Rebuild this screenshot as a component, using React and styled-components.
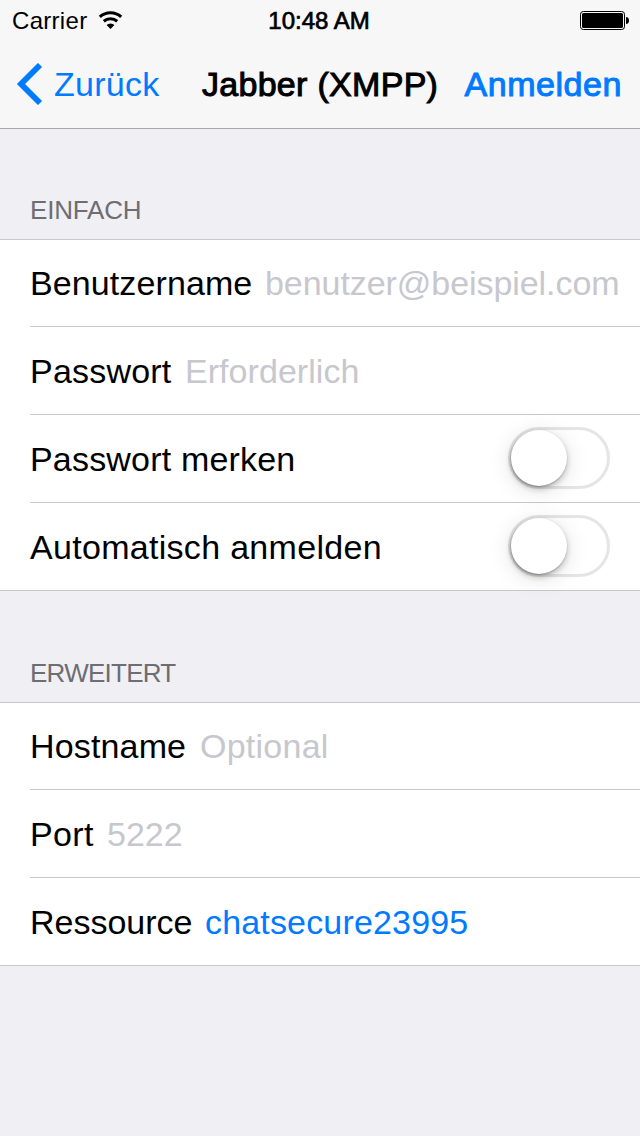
import React from "react";
import styled, { createGlobalStyle, css } from "styled-components";

const GlobalStyle = createGlobalStyle`
  html, body { margin: 0; background: #efeff4; }
  * { box-sizing: border-box; }
`;

const BLUE = "#007aff";

const Screen = styled.main`
  width: 640px;
  height: 1136px;
  overflow: hidden;
  background: #efeff4;
  color: #000;
  font-family: "Liberation Sans", Arial, sans-serif;
  font-size: 34px;
  white-space: nowrap;
`;

const Header = styled.header`
  height: 129px;
  background: #f7f7f7;
  border-bottom: 1px solid #a7a7ab;
`;

const medium = css`
  -webkit-text-stroke: 1px currentColor;
`;

const StatusBar = styled.div`
  display: grid;
  grid-template-columns: 1fr auto 1fr;
  height: 40px;
  padding: 1px 11px 0 12px;
  font-size: 24px;
  line-height: 40px;
`;

const Carrier = styled.div`
  display: flex;
  gap: 11px;
  letter-spacing: 0.3px;
  svg { margin-top: 10px; }
`;

const Clock = styled.time`
  padding-right: 3px;
  -webkit-text-stroke: 0.7px currentColor;
`;

const BatterySlot = styled.div`
  display: flex;
  justify-content: flex-end;
  svg { margin-top: 10px; }
`;

const NavBar = styled.nav`
  display: flex;
  align-items: center;
  height: 88px;
  padding: 0 18px 0 16px;
  line-height: 88px;
`;

const NavButton = styled.a`
  display: flex;
  align-items: center;
  gap: 11px;
  color: ${BLUE};
  letter-spacing: ${(p) => p.$track || 0}px;
  ${(p) => p.$strong && medium}
`;

const Title = styled.h1`
  flex: 1;
  margin: 0;
  padding-left: 42.5px;
  font: inherit;
  letter-spacing: 0.3px;
  ${medium}
`;

const SectionTitle = styled.h2`
  height: 49px;
  margin: ${(p) => p.$gap}px 0 0;
  padding-left: 30px;
  color: #6d6d72;
  font-size: 26px;
  font-weight: 400;
  line-height: 40px;
  letter-spacing: ${(p) => p.$track || 0}px;
`;

const Group = styled.div`
  background: #fff;
  box-shadow: inset 0 1px #c8c7cc, inset 0 -1px #c8c7cc;
`;

const Row = styled.div`
  display: flex;
  height: 88px;
  margin-left: 30px;
  padding-right: 30px;
  line-height: 88px;
  & + & { box-shadow: 0 -1px #c8c7cc; }
`;

const Label = styled.span`
  width: ${(p) => (p.$width ? p.$width + "px" : "auto")};
  flex: ${(p) => (p.$width ? "none" : "1")};
  letter-spacing: ${(p) => p.$track || 0}px;
`;

const Value = styled.span`
  color: ${(p) => (p.$filled ? BLUE : "#c7c7cd")};
  letter-spacing: ${(p) => p.$track || 0}px;
`;

const Toggle = styled.span`
  width: 102px;
  height: 62px;
  margin-top: 12px;
  border: 3px solid #e5e5e5;
  border-radius: 31px;
`;

const Knob = styled.span`
  display: block;
  width: 56px;
  height: 56px;
  border-radius: 50%;
  background: #fff;
  box-shadow: -0.5px 1px 2px rgba(0, 0, 0, 0.3), 0 3px 6px rgba(0, 0, 0, 0.22), 0 4px 24px rgba(0, 0, 0, 0.12);
`;

const WifiIcon = () => (
  <svg width="25" height="18" viewBox="0 0 25 18" fill="none" stroke="#000" strokeWidth="3.1">
    <path d="M1.8 5.9 A16 16 0 0 1 23.2 5.9" />
    <path d="M5.8 10.3 A10.3 10.3 0 0 1 19.2 10.3" />
    <path d="M12.5 18 L8.6 14 A5.6 5.6 0 0 1 16.4 14 Z" fill="#000" stroke="none" />
  </svg>
);

const BatteryIcon = () => (
  <svg width="49" height="19" viewBox="0 0 49 19">
    <rect x="0.5" y="0.5" width="44" height="18" rx="2.8" fill="none" stroke="#000" />
    <rect x="2" y="2" width="41" height="15" rx="1.6" />
    <path d="M46 6 C48 6 49 7.5 49 9.5 C49 11.5 48 13 46 13 Z" />
  </svg>
);

const BackIcon = () => (
  <svg width="27" height="42" viewBox="0 0 27 42" fill="none" stroke={BLUE} strokeWidth="5.8">
    <path d="M24 2 L5 21 L24 40" />
  </svg>
);

const SwitchRow = ({ label, track }) => (
  <Row>
    <Label $track={track}>{label}</Label>
    <Toggle role="switch" aria-checked="false"><Knob /></Toggle>
  </Row>
);

const FieldRow = ({ label, width, track, value, valueTrack, filled }) => (
  <Row>
    <Label $width={width} $track={track}>{label}</Label>
    <Value $filled={filled} $track={valueTrack}>{value}</Value>
  </Row>
);

export default function App() {
  return (
    <Screen>
      <GlobalStyle />
      <Header>
        <StatusBar>
          <Carrier>Carrier<WifiIcon /></Carrier>
          <Clock>10:48 AM</Clock>
          <BatterySlot><BatteryIcon /></BatterySlot>
        </StatusBar>
        <NavBar>
          <NavButton $track={0.25}><BackIcon />Zurück</NavButton>
          <Title>Jabber (XMPP)</Title>
          <NavButton $strong $track={0.55}>Anmelden</NavButton>
        </NavBar>
      </Header>
      <SectionTitle $gap={61} $track={-0.2}>EINFACH</SectionTitle>
      <Group>
        <FieldRow label="Benutzername" width={235} track={0.1} value="benutzer@beispiel.com" valueTrack={-0.06} />
        <FieldRow label="Passwort" width={155} track={0.2} value="Erforderlich" valueTrack={0.05} />
        <SwitchRow label="Passwort merken" track={0.18} />
        <SwitchRow label="Automatisch anmelden" track={0.3} />
      </Group>
      <SectionTitle $gap={62} $track={-0.75}>ERWEITERT</SectionTitle>
      <Group>
        <FieldRow label="Hostname" width={170} track={0.15} value="Optional" valueTrack={0.25} />
        <FieldRow label="Port" width={77} track={0.35} value="5222" />
        <FieldRow label="Ressource" width={175} value="chatsecure23995" valueTrack={0.17} filled />
      </Group>
    </Screen>
  );
}
